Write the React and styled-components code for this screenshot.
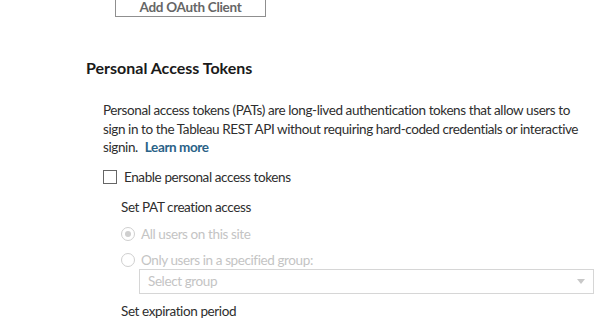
import React from "react";
import styled, { createGlobalStyle } from "styled-components";

const FONT = `Lato, Roboto, "Liberation Sans", sans-serif`;

const Global = createGlobalStyle`
  html, body { margin: 0; padding: 0; background: #fff; }
  body { font-family: ${FONT}; color: #333; overflow: hidden; }
`;

const Page = styled.div`
  width: 599px;
  height: 330px;
  overflow: hidden;
  padding-left: 86px;
  box-sizing: border-box;
`;

const Scroll = styled.div`
  margin-top: -10px;
`;

const OutlineButton = styled.button`
  margin-left: 29px;
  width: 151px;
  height: 27px;
  box-sizing: border-box;
  border: 1px solid #8f8f8f;
  background: #fff;
  color: #666;
  font-family: ${FONT};
  font-weight: 700;
  font-size: 13.5px;
  letter-spacing: -0.3px;
  padding: 0;
  padding-top: 6px;
  display: block;
`;

const Heading = styled.h2`
  margin: 41px 0 0 0;
  font-size: 16px;
  line-height: 20px;
  font-weight: 700;
  color: #1a1a1a;
`;

const Section = styled.div`
  padding-left: 17px;
  margin-top: 23px;
  font-size: 13.5px;
  letter-spacing: -0.4px;
`;

const Para = styled.p`
  margin: 0;
  line-height: 18.5px;
  color: #2e2e2e;
  white-space: nowrap;
`;

const Link = styled.a`
  font-weight: 700;
  color: #2a6287;
  text-decoration: none;
  margin-left: 4px;
`;

const CheckRow = styled.label`
  display: flex;
  align-items: center;
  gap: 7px;
  margin-top: 11px;
  line-height: 18px;
  color: #2e2e2e;
`;

const Box = styled.span`
  width: 14px;
  height: 14px;
  box-sizing: border-box;
  border: 1px solid #666;
  background: #fff;
`;

const Sub = styled.div`
  padding-left: 18px;
`;

const SubLabel = styled.div`
  line-height: 18px;
  color: #2e2e2e;
  margin-top: ${(p) => p.$top}px;
`;

const RadioRow = styled.div`
  display: flex;
  align-items: center;
  gap: 6px;
  margin-top: ${(p) => p.$top}px;
  line-height: 18px;
  color: #c4c4c4;
`;

const Radio = styled.span`
  width: 14px;
  height: 14px;
  box-sizing: border-box;
  border-radius: 50%;
  border: 1px solid #cfcfcf;
  display: flex;
  align-items: center;
  justify-content: center;
  &::after {
    content: "";
    width: 6px;
    height: 6px;
    border-radius: 50%;
    background: ${(p) => (p.$checked ? "#cfcfcf" : "transparent")};
  }
`;

const Select = styled.div`
  margin-left: 18px;
  margin-top: 0;
  width: 455px;
  height: 25px;
  box-sizing: border-box;
  border: 1px solid #d6d6d6;
  display: flex;
  align-items: center;
  justify-content: space-between;
  padding: 0 8px 0 8px;
  color: #c4c4c4;
`;

const Arrow = styled.span`
  width: 0;
  height: 0;
  border-left: 4px solid transparent;
  border-right: 4px solid transparent;
  border-top: 5px solid #c8c8c8;
`;

export default function App() {
  return (
    <>
      <Global />
      <Page>
        <Scroll>
          <OutlineButton>Add OAuth Client</OutlineButton>
          <Heading>Personal Access Tokens</Heading>
          <Section>
            <Para>
              Personal access tokens (PATs) are long-lived authentication tokens that allow users to
              <br />
              sign in to the Tableau REST API without requiring hard-coded credentials or interactive
              <br />
              signin. <Link href="#">Learn more</Link>
            </Para>
            <CheckRow>
              <Box />
              Enable personal access tokens
            </CheckRow>
            <Sub>
              <SubLabel $top={12}>Set PAT creation access</SubLabel>
              <RadioRow $top={9}>
                <Radio $checked />
                All users on this site
              </RadioRow>
              <RadioRow $top={8}>
                <Radio />
                Only users in a specified group:
              </RadioRow>
              <Select>
                Select group
                <Arrow />
              </Select>
              <SubLabel $top={8}>Set expiration period</SubLabel>
            </Sub>
          </Section>
        </Scroll>
      </Page>
    </>
  );
}
